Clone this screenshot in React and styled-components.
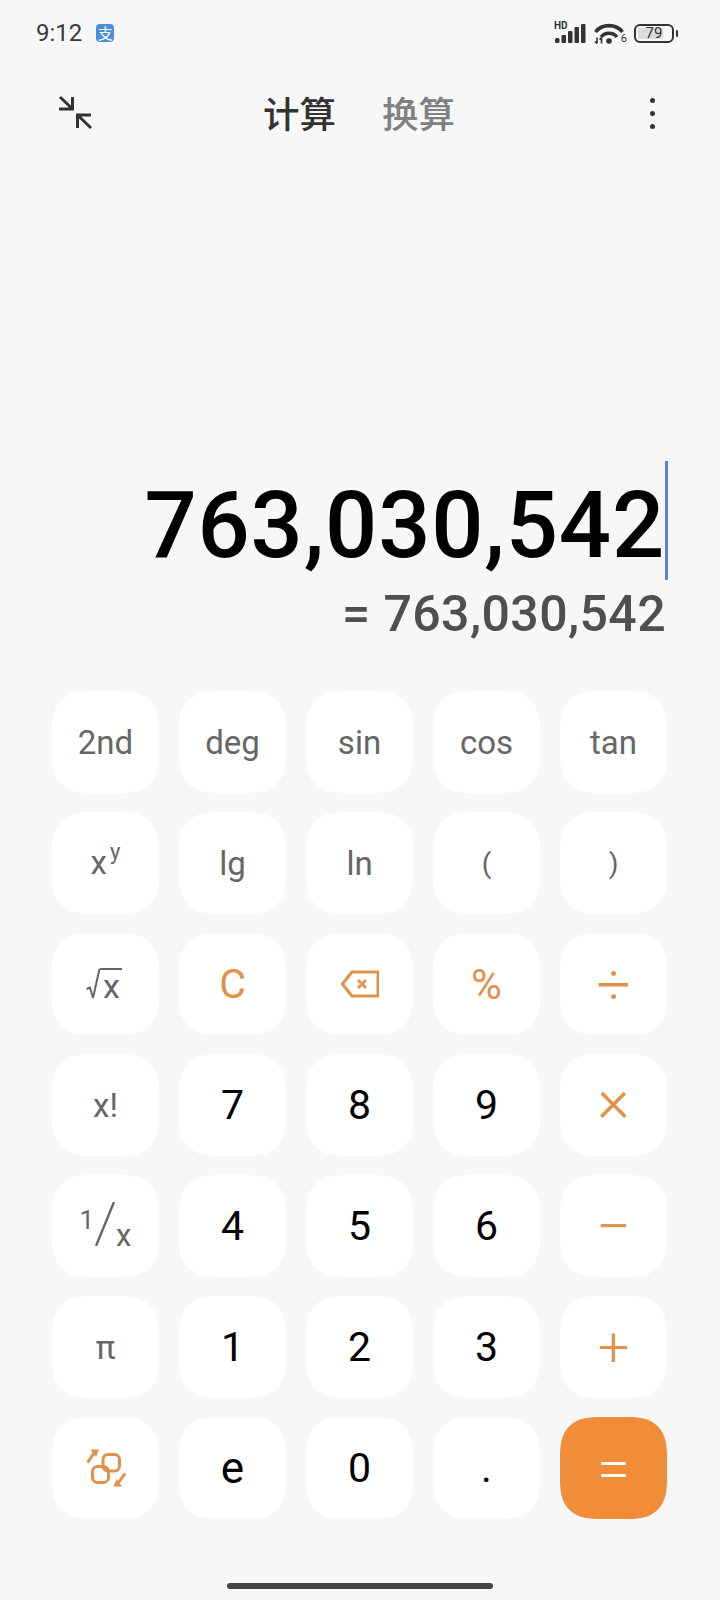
import React from 'react';
import styled, { createGlobalStyle } from 'styled-components';

const GlobalStyle = createGlobalStyle`
  html, body { margin: 0; padding: 0; background: #f7f7f7; }
  * { box-sizing: border-box; }
`;

const ORANGE = '#e2914a';

const CompressIcon = () => (
  <svg width="36" height="36" viewBox="0 0 36 36" fill="none" stroke="#333" strokeWidth="3">
    <path d="M3 2 L15.5 14 M2 14 H16.5 M15.5 2 V15" />
    <path d="M20.5 20 H34 M20.5 18.5 V33 M20.5 20 L34 33" />
  </svg>
);

const Signal = () => (
  <svg width="32" height="20" viewBox="0 0 32 20" fill="#333">
    <rect x="1" y="14" width="4.5" height="5" rx="1.5" />
    <rect x="7.5" y="11" width="4.5" height="8" rx="1" />
    <rect x="14" y="7" width="4.5" height="12" rx="1" />
    <rect x="20.5" y="3" width="4.5" height="16" rx="1" />
    <rect x="27" y="0" width="4.5" height="19" rx="1" />
  </svg>
);

const Wifi = () => (
  <svg width="30" height="22" viewBox="0 0 30 22" fill="none" stroke="#333">
    <path d="M1.5 10 C8 1.5 22 1.5 28.5 10" strokeWidth="3.6" />
    <path d="M7 15 C11 10 19 10 23 15" strokeWidth="3.4" />
    <circle cx="15" cy="19" r="2.8" fill="#333" stroke="none" />
    <path d="M3 15.5 V21.5 M1 19.5 L3 21.5 M7.5 21.5 V15.5 M5.5 17.5 L7.5 15.5" strokeWidth="1.6" />
  </svg>
);

const BackspaceIcon = () => (
  <svg width="38" height="28" viewBox="0 0 38 28" fill="none" stroke={ORANGE} strokeWidth="3" strokeLinejoin="round">
    <path d="M1.5 14 L11 2 H37 V26 H11 Z" />
    <path d="M17 10 L25 18 M25 10 L17 18" strokeWidth="2.6" />
  </svg>
);

const SwapIcon = () => (
  <svg width="46" height="44" viewBox="0 0 46 44" fill="none" stroke={ORANGE} strokeWidth="3">
    <rect x="9.5" y="20.5" width="16" height="16" rx="5" />
    <rect x="20" y="8.5" width="16.5" height="16.5" rx="5" />
    <path d="M4.5 16.5 L11.5 6.5" />
    <path d="M7.5 3.5 H16 L13 11 Z" fill={ORANGE} stroke="none" />
    <path d="M42 27.5 L35 37.5" />
    <path d="M39 40.5 H30.5 L33.5 33 Z" fill={ORANGE} stroke="none" />
  </svg>
);

const RadicalIcon = () => (
  <svg width="14" height="32" viewBox="0 0 14 32" fill="none" stroke="#666" strokeWidth="2">
    <path d="M0.5 21 L4 19.5 L7 30 L13.5 1" />
  </svg>
);

const SlashIcon = () => (
  <svg width="20" height="44" viewBox="0 0 20 44" fill="none" stroke="#666" strokeWidth="2.4">
    <path d="M1 44 L19 0" />
  </svg>
);

const buildKeys = () => [
  { id: '2nd', label: '2nd' },
  { id: 'deg', label: 'deg' },
  { id: 'sin', label: 'sin' },
  { id: 'cos', label: 'cos' },
  { id: 'tan', label: 'tan' },
  { id: 'xy', label: <PowerLabel>x<Sup>y</Sup></PowerLabel> },
  { id: 'lg', label: 'lg' },
  { id: 'ln', label: 'ln' },
  { id: 'lp', label: '(', size: 28 },
  { id: 'rp', label: ')', size: 28 },
  { id: 'root', label: <RootLabel><RadicalIcon /><Radicand>x</Radicand></RootLabel> },
  { id: 'c', label: 'C', tone: 'op', size: 41, weight: 400 },
  { id: 'back', label: <BackspaceIcon />, tone: 'op' },
  { id: 'pct', label: '%', tone: 'op', size: 42, weight: 400 },
  { id: 'div', label: '÷', tone: 'op', size: 60 },
  { id: 'fact', label: 'x!' },
  { id: '7', label: '7', tone: 'num' },
  { id: '8', label: '8', tone: 'num' },
  { id: '9', label: '9', tone: 'num' },
  { id: 'mul', label: '×', tone: 'op', size: 62, lift: 12 },
  { id: 'inv', label: <Fraction><FracOne>1</FracOne><SlashIcon /><FracX>x</FracX></Fraction> },
  { id: '4', label: '4', tone: 'num' },
  { id: '5', label: '5', tone: 'num' },
  { id: '6', label: '6', tone: 'num' },
  { id: 'sub', label: '−', tone: 'op', size: 62 },
  { id: 'pi', label: 'π' },
  { id: '1', label: '1', tone: 'num' },
  { id: '2', label: '2', tone: 'num' },
  { id: '3', label: '3', tone: 'num' },
  { id: 'add', label: '+', tone: 'op', size: 56 },
  { id: 'swap', label: <SwapIcon />, tone: 'op' },
  { id: 'e', label: 'e', tone: 'num', size: 44 },
  { id: '0', label: '0', tone: 'num' },
  { id: 'dot', label: '.', tone: 'num' },
  { id: 'eq', label: '=', tone: 'accent', size: 60 },
];

const App = () => (
  <Screen>
    <GlobalStyle />
    <StatusBar>
      <StatusLeft>
        <Clock>9:12</Clock>
        <AlipayBadge>支</AlipayBadge>
      </StatusLeft>
      <StatusRight>
        <SignalGroup>
          <HdLabel>HD</HdLabel>
          <Signal />
        </SignalGroup>
        <WifiGroup>
          <Wifi />
          <WifiGen>6</WifiGen>
        </WifiGroup>
        <BatteryGroup>
          <Battery>
            <BatteryFill $level={79} />
            <BatteryText>79</BatteryText>
          </Battery>
          <BatteryNub />
        </BatteryGroup>
      </StatusRight>
    </StatusBar>

    <Header>
      <CompressButton><CompressIcon /></CompressButton>
      <Tabs>
        <Tab $active>计算</Tab>
        <Tab>换算</Tab>
      </Tabs>
      <Kebab>
        <Dot />
        <Dot />
        <Dot />
      </Kebab>
    </Header>

    <Display>
      <Expression>
        763,030,542
        <Caret />
      </Expression>
      <Result>= 763,030,542</Result>
    </Display>

    <Keypad>
      {buildKeys().map((key) => (
        <Key key={key.id} $tone={key.tone} $size={key.size} $weight={key.weight} $lift={key.lift}>
          {key.label}
        </Key>
      ))}
    </Keypad>

    <HomeIndicator />
  </Screen>
);

export default App;

const Screen = styled.div`
  width: 720px;
  height: 1600px;
  display: flex;
  flex-direction: column;
  overflow: hidden;
  background: #f7f7f7;
  font-family: Roboto, "Noto Sans CJK SC", sans-serif;
`;

const StatusBar = styled.div`
  height: 66px;
  padding: 0 42px 0 36px;
  display: flex;
  align-items: center;
  justify-content: space-between;
`;

const StatusLeft = styled.div`
  display: flex;
  align-items: center;
  gap: 14px;
`;

const Clock = styled.span`
  font-size: 24px;
  color: #3a3a3a;
`;

const AlipayBadge = styled.span`
  width: 18px;
  height: 18px;
  border-radius: 4px;
  background: #4a90d6;
  color: #fff;
  font-size: 15px;
  line-height: 18px;
  text-align: center;
  font-family: "Noto Sans CJK SC", sans-serif;
`;

const StatusRight = styled.div`
  display: flex;
  align-items: center;
  gap: 8px;
`;

const SignalGroup = styled.div`
  width: 32px;
  height: 22px;
  position: relative;
  display: flex;
  align-items: flex-end;
`;

const HdLabel = styled.span`
  position: absolute;
  left: 0;
  top: -1px;
  font-size: 10px;
  line-height: 9px;
  font-weight: 700;
  color: #333;
`;

const WifiGroup = styled.div`
  width: 32px;
  height: 22px;
  position: relative;
`;

const WifiGen = styled.span`
  position: absolute;
  right: -1px;
  bottom: 0;
  font-size: 11px;
  line-height: 10px;
  color: #333;
`;

const BatteryGroup = styled.div`
  display: flex;
  align-items: center;
  gap: 2px;
`;

const Battery = styled.div`
  width: 40px;
  height: 19px;
  padding: 2px;
  border: 2px solid #333;
  border-radius: 6px;
  position: relative;
`;

const BatteryFill = styled.div`
  height: 100%;
  width: ${(props) => props.$level}%;
  background: #dcdcdc;
  border-radius: 2px;
`;

const BatteryText = styled.span`
  position: absolute;
  inset: 0;
  text-align: center;
  font-size: 15px;
  line-height: 15px;
  color: #333;
`;

const BatteryNub = styled.div`
  width: 2px;
  height: 7px;
  border-radius: 1px;
  background: #333;
`;

const Header = styled.div`
  height: 94px;
  padding: 0 63px 0 57px;
  display: grid;
  grid-template-columns: 1fr auto 1fr;
  align-items: center;
`;

const CompressButton = styled.div`
  width: 36px;
  height: 36px;
`;

const Tabs = styled.div`
  display: flex;
  gap: 46px;
  margin-left: 4px;
`;

const Tab = styled.span`
  font-size: 36.5px;
  line-height: 44px;
  font-weight: 500;
  font-family: "Noto Sans CJK SC", sans-serif;
  color: ${(props) => (props.$active ? '#333' : '#808080')};
`;

const Kebab = styled.div`
  justify-self: end;
  width: 10px;
  display: flex;
  flex-direction: column;
  align-items: center;
  gap: 8px;
`;

const Dot = styled.span`
  width: 5px;
  height: 5px;
  border-radius: 50%;
  background: #333;
`;

const Display = styled.div`
  flex: 1;
  padding: 0 55px 48px 0;
  display: flex;
  flex-direction: column;
  justify-content: flex-end;
  align-items: flex-end;
`;

const Expression = styled.div`
  display: flex;
  align-items: center;
  font-size: 92px;
  line-height: 118px;
  font-weight: 500;
  letter-spacing: 0.8px;
  color: #000;
`;

const Caret = styled.span`
  width: 3px;
  height: 119px;
  margin-right: -3px;
  margin-top: -12px;
  background: #5b84d8;
`;

const Result = styled.div`
  font-size: 50px;
  line-height: 58px;
  font-weight: 500;
  letter-spacing: 0.4px;
  margin-right: -1px;
  color: #4f4f4f;
`;

const Keypad = styled.div`
  padding: 0 53px 0 52px;
  display: grid;
  grid-template-columns: repeat(5, 107px);
  grid-auto-rows: 102px;
  column-gap: 20px;
  row-gap: 19px;
`;

const toneColor = { num: '#000', op: ORANGE, accent: '#fff' };

const Key = styled.div`
  display: flex;
  align-items: center;
  justify-content: center;
  padding-bottom: ${(props) => props.$lift || 0}px;
  border-radius: 40px;
  corner-shape: superellipse(1.4);
  background: ${(props) => (props.$tone === 'accent' ? '#f18c38' : '#fff')};
  color: ${(props) => toneColor[props.$tone] || '#666'};
  font-size: ${(props) => props.$size || (props.$tone === 'num' ? 41 : 33)}px;
  font-weight: ${(props) => props.$weight || (props.$tone === 'op' || props.$tone === 'accent' ? 300 : 400)};
`;

const PowerLabel = styled.span`
  display: flex;
  align-items: flex-start;
  font-size: 33px;
  line-height: 40px;
`;

const Sup = styled.span`
  font-size: 22px;
  line-height: 22px;
  margin-left: 3px;
  margin-top: -2px;
`;

const RootLabel = styled.span`
  display: flex;
  align-items: flex-start;
  margin-right: 3px;
`;

const Radicand = styled.span`
  height: 30px;
  padding: 0 2px 0 3px;
  border-top: 2px solid #666;
  font-size: 34px;
  line-height: 32px;
`;

const Fraction = styled.span`
  height: 44px;
  display: flex;
  margin-bottom: 5px;
`;

const FracOne = styled.span`
  align-self: flex-start;
  font-size: 26px;
  line-height: 22px;
  margin-top: 7px;
  margin-right: 1px;
`;

const FracX = styled.span`
  align-self: flex-end;
  font-size: 31px;
  line-height: 20px;
  margin-left: 1px;
`;

const HomeIndicator = styled.div`
  width: 266px;
  height: 6px;
  margin: 64px 0 11px 227px;
  border-radius: 3px;
  background: #444;
`;
